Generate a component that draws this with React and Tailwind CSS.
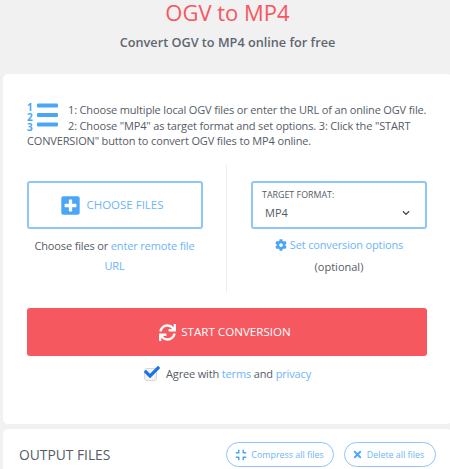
import React from 'react';
import { FaPlusSquare, FaCog, FaSync, FaCheck, FaCompress, FaTimes, FaChevronDown } from 'react-icons/fa';

function ListIcon() {
    return (
        <svg width="32" height="30" viewBox="0 0 32 30" className="float-left mr-[9px] mt-[-1px]">
            <text x="0" y="10" fontSize="10" fontWeight="700" fill="#4ba6f8" fontFamily="Open Sans, sans-serif">1</text>
            <text x="0" y="20" fontSize="10" fontWeight="700" fill="#4ba6f8" fontFamily="Open Sans, sans-serif">2</text>
            <text x="0" y="29.5" fontSize="10" fontWeight="700" fill="#4ba6f8" fontFamily="Open Sans, sans-serif">3</text>
            <rect x="10" y="2.5" width="21" height="4" rx="1" fill="#4ba6f8" />
            <rect x="10" y="12" width="21" height="4" rx="1" fill="#4ba6f8" />
            <rect x="10" y="21.5" width="21" height="4" rx="1" fill="#4ba6f8" />
        </svg>
    );
}

export default function App() {
    return (
        <div className="w-[450px] h-[469px] overflow-hidden bg-[#f1f1f1] font-['Open_Sans',sans-serif] text-[#555c66]">
            <div className="w-[449px] ml-[3px]">
                {/* Encabezado */}
                <div className="h-[74px] text-center">
                    <h1 className="text-[22px] leading-[24px] text-[#f9565f]">OGV to MP4</h1>
                    <p className="text-[12.7px] leading-[20px] font-semibold mt-[8px] text-[#5f6672]">Convert OGV to MP4 online for free</p>
                </div>

                {/* Tarjeta principal */}
                <div className="h-[350px] bg-white rounded-[5px] pt-[28px] px-[24px]">
                    <div className="w-[401px] h-[63px] text-[11px] leading-[15.5px] tracking-[-0.15px]">
                        <ListIcon />
                        <p>
                            1: Choose multiple local OGV files or enter the URL of an online OGV file.
                            2: Choose "MP4" as target format and set options. 3: Click the "START CONVERSION" button to convert OGV files to MP4 online.
                        </p>
                    </div>

                    <div className="flex w-[400px] h-[128px]">
                        <div className="w-[200px] pt-[16px] pr-[24px] border-r border-[#eeeeee]">
                            <button className="w-[176px] h-[48px] flex items-center justify-center gap-[5px] pr-[6px] border-2 border-[#8cc6fb] rounded-[3px] text-[#6db5f9] text-[11.5px]">
                                <FaPlusSquare className="w-[21px] h-[21px] text-[#4ba6f8]" />
                                CHOOSE FILES
                            </button>
                            <p className="text-center text-[11px] tracking-[-0.15px] leading-[20px] mt-[7px]">
                                Choose files or <a className="text-[#6db5f9]">enter remote file URL</a>
                            </p>
                        </div>
                        <div className="flex-1 pt-[16px] pl-[24px]">
                            <div className="w-[176px] h-[48px] border-2 border-[#8cc6fb] rounded-[3px] px-[9px] pt-[5px]">
                                <div className="text-[8.9px] leading-[14px]">TARGET FORMAT:</div>
                                <div className="flex items-center justify-between text-[11px] leading-[20px] pl-[3px] pr-[6px] mt-[1px]">
                                    MP4
                                    <FaChevronDown className="w-[8px] h-[8px] text-[#444444]" />
                                </div>
                            </div>
                            <div className="flex items-center justify-center gap-[3px] text-[11px] tracking-[-0.15px] leading-[20px] text-[#6db5f9] mt-[6px]">
                                <FaCog className="w-[12px] h-[12px] text-[#4ba6f8]" />
                                Set conversion options
                            </div>
                            <div className="text-center text-[11px] leading-[20px] mt-[2px]">(optional)</div>
                        </div>
                    </div>

                    <button className="w-[400px] h-[48px] mt-[15px] flex items-center justify-center gap-[5px] pr-[4px] bg-[#f6585f] rounded-[3px] text-white text-[11.6px]">
                        <FaSync className="w-[17px] h-[17px]" />
                        START CONVERSION
                    </button>

                    <div className="flex items-center justify-center gap-[9px] mt-[8px] text-[11px] tracking-[-0.15px] leading-[20px]">
                        <span className="relative w-[13px] h-[13px] bg-[#f3f3f3] border border-[#d8d8d8] rounded-[3px] mt-[1px]">
                            <FaCheck className="absolute left-[-1px] top-[-5px] w-[16px] h-[16px] text-[#1a73e8]" />
                        </span>
                        <span>
                            Agree with <a className="text-[#6db5f9]">terms</a> and <a className="text-[#6db5f9]">privacy</a>
                        </span>
                    </div>
                </div>

                {/* Archivos de salida */}
                <div className="h-[60px] mt-[5px] bg-white rounded-[5px] pl-[16px] pt-[13px] flex items-start">
                    <h2 className="text-[13.8px] leading-[25px] w-[207px]">OUTPUT FILES</h2>
                    <button className="w-[108px] h-[25px] flex items-center justify-center gap-[4px] pr-[1px] border border-[#8cc6fb] rounded-full text-[8.9px] text-[#6db5f9]">
                        <FaCompress className="w-[12px] h-[12px] text-[#4ba6f8]" />
                        Compress all files
                    </button>
                    <button className="w-[92px] h-[25px] ml-[10px] flex items-center justify-center gap-[4px] pr-[4px] border border-[#8cc6fb] rounded-full text-[8.9px] text-[#6db5f9]">
                        <FaTimes className="w-[11px] h-[11px] text-[#4ba6f8]" />
                        Delete all files
                    </button>
                </div>
            </div>
        </div>
    );
}
